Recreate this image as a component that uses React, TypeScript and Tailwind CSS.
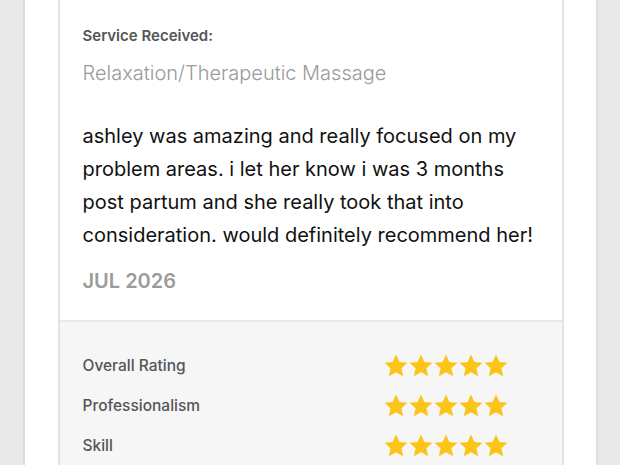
import React from "react"

const ratings = ["Overall Rating", "Professionalism", "Skill"]

function Star() {
  return (
    <svg viewBox="0 0 24 24" className="h-[26px] w-[26px]" aria-hidden="true">
      <path
        d="M12 1.4l3.1 6.9 7.5.8-5.6 5 1.6 7.4L12 17.7l-6.6 3.8 1.6-7.4-5.6-5 7.5-.8z"
        fill="#fcc419"
      />
    </svg>
  )
}

function Stars({ count }: { count: number }) {
  return (
    <div className="flex -space-x-[1px]">
      {Array.from({ length: count }).map((_, i) => (
        <Star key={i} />
      ))}
    </div>
  )
}

export default function App() {
  return (
    <div
      className="min-h-[465px] bg-[#e9e9e9] px-[22px]"
      style={{ fontFamily: 'Inter, "Liberation Sans", sans-serif' }}
    >
      <div className="mx-auto min-h-[465px] w-[575px] border-x-2 border-[#dedede] bg-white px-[33px]">
        <div className="min-h-[465px] w-[506px] border-x-2 border-[#e2e2e2]">
          <div className="px-[23px] pt-[25px] pb-[24px]">
            <p className="text-[15px] font-semibold text-[#555]">Service Received:</p>
            <p className="mt-[10px] text-[20px] font-light text-[#9a9a9a]">Relaxation/Therapeutic Massage</p>
            <p className="mt-[32px] text-[20px] leading-[33px] text-[#111]">
              ashley was amazing and really focused on my problem areas. i let her know i
              was 3 months post partum and she really took that into consideration. would
              definitely recommend her!
            </p>
            <p className="mt-[14px] text-[20px] font-semibold text-[#9b9b9b]">JUL 2026</p>
          </div>
          <div className="border-t-2 border-[#e8e8e8] bg-[#f6f6f6] px-[23px] pt-[24px] pb-[20px]">
            {ratings.map((label) => (
              <div key={label} className="flex h-[40px] items-center">
                <span className="w-[300px] text-[15.5px] font-medium text-[#555]">{label}</span>
                <Stars count={5} />
              </div>
            ))}
          </div>
        </div>
      </div>
    </div>
  )
}
